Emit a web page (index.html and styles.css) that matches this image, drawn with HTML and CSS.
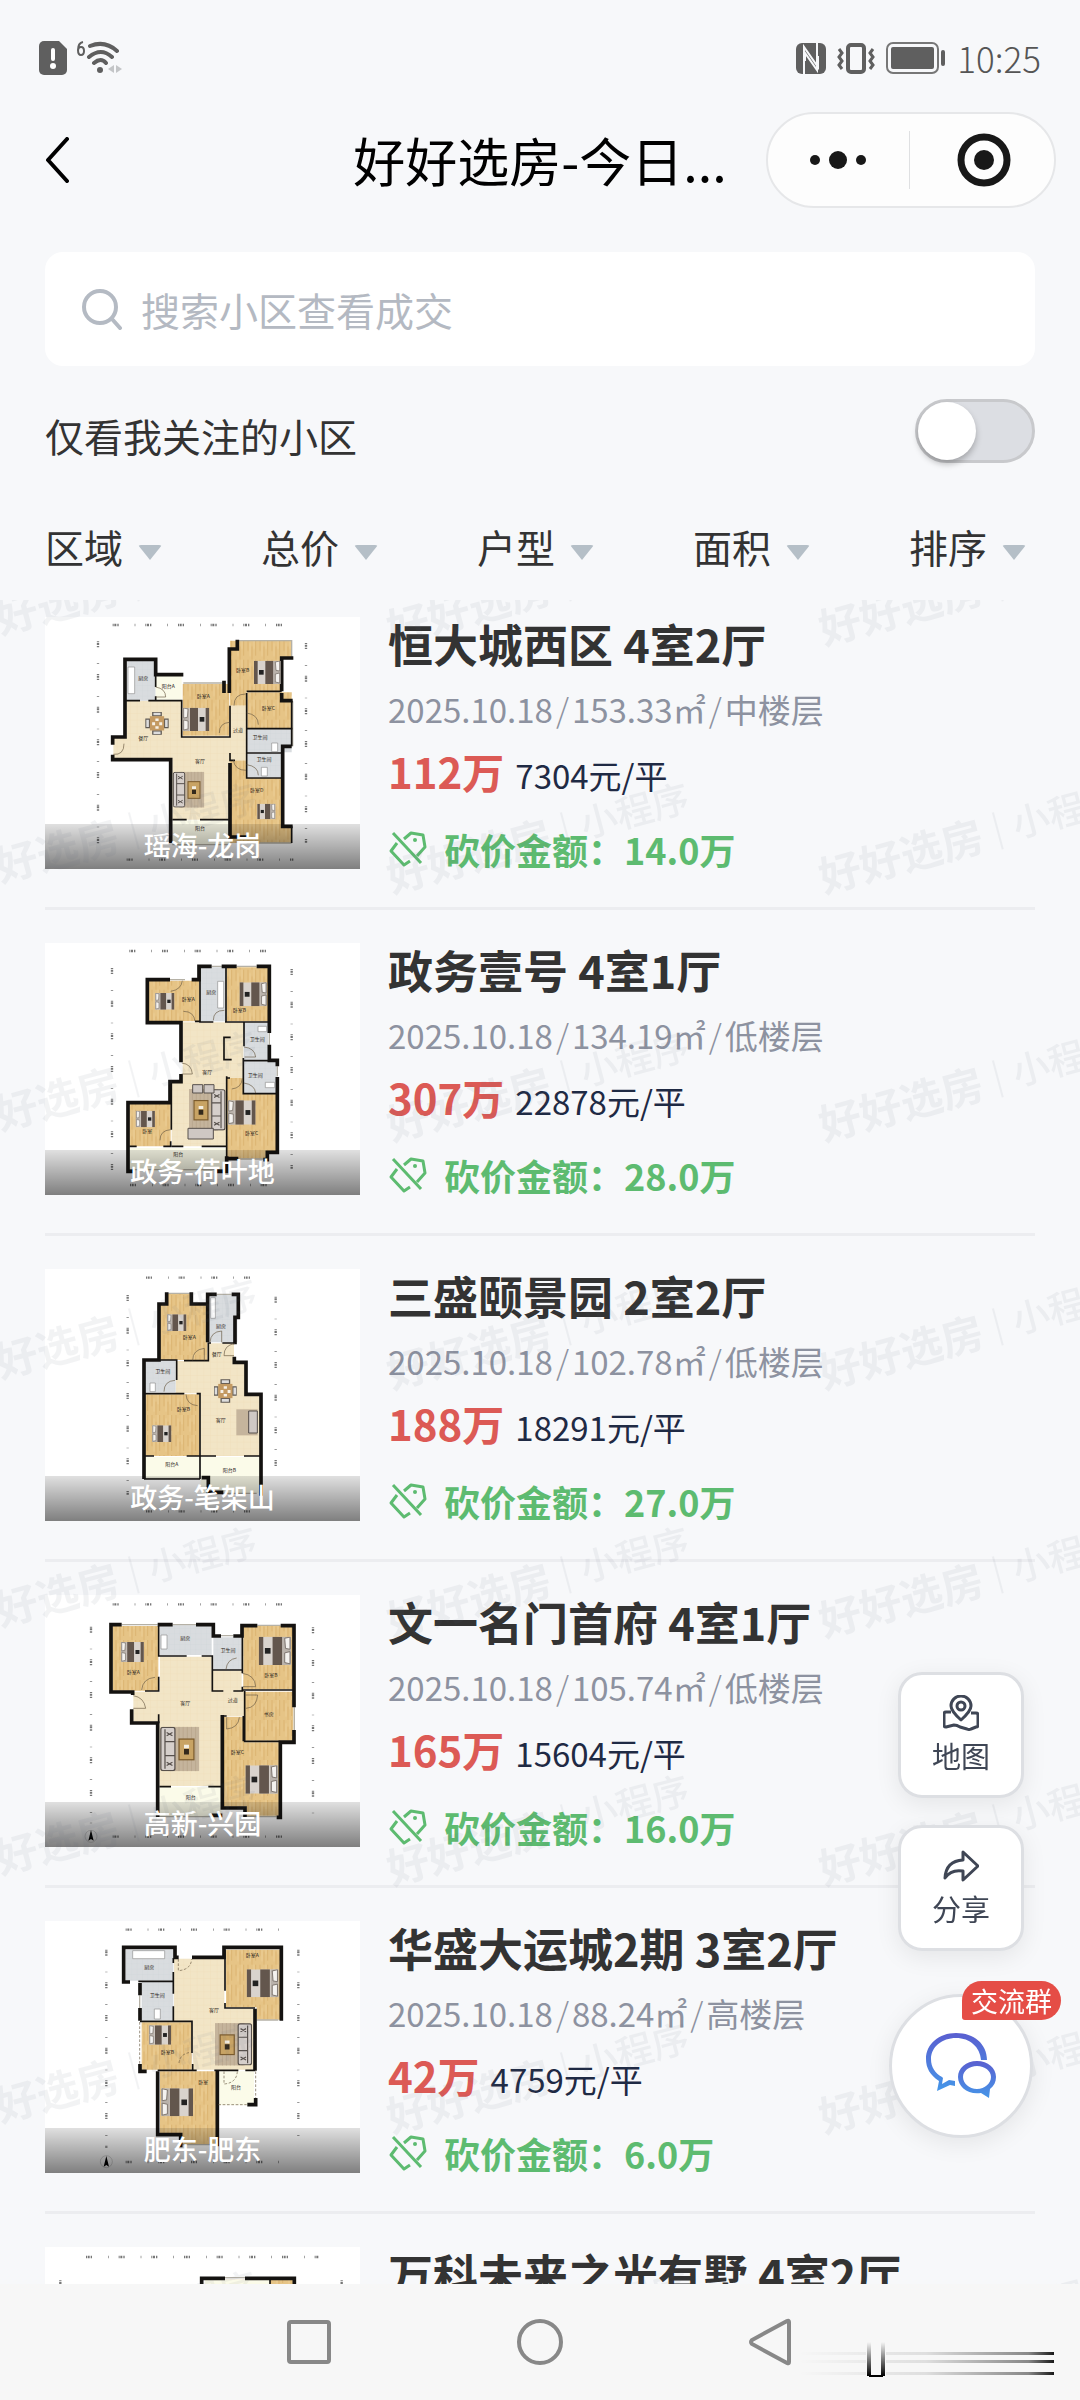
FILE: index.html
```html
<!DOCTYPE html>
<html lang="zh-CN">
<head>
    <meta charset="UTF-8">
    <meta name="viewport" content="width=device-width, initial-scale=1.0">
    <title>好好选房</title>
    <link rel="stylesheet" href="styles.css">
</head>
<body>
    <!-- Shared drawing parts -->
    <svg class="defs" aria-hidden="true">
        <defs>
            <pattern id="wood" width="36" height="60" patternUnits="userSpaceOnUse">
                <rect width="36" height="60" fill="#e6c486"/>
                <path d="M6 0v34M18 20v40M29 0v48" stroke="#dcb572" stroke-width="3"/>
                <path d="M12 10v40M24 0v28" stroke="#ecce96" stroke-width="3"/>
            </pattern>
            <pattern id="stone" width="20" height="20" patternUnits="userSpaceOnUse">
                <rect width="20" height="20" fill="#f2e5c6"/>
                <path d="M0 0h20M0 0v20" stroke="#ecdcb6" stroke-width="2"/>
            </pattern>
            <pattern id="tile" width="16" height="16" patternUnits="userSpaceOnUse">
                <rect width="16" height="16" fill="#d9dcdf"/>
                <path d="M0 0h16M0 0v16" stroke="#cdd1d5" stroke-width="1"/>
            </pattern>
            <symbol id="bed" viewBox="0 0 80 70">
                <rect width="80" height="70" fill="#d9d3cd"/>
                <path d="M0 0h11v70H0zM34 0h24v70H34z" fill="#63564d"/>
                <rect x="15" y="28" width="14" height="14" fill="#222"/>
                <path d="M60 0h20v70H60z" fill="#b9b2ab"/>
                <path d="M64 4l13-3v30l-11-2zM64 40l13-3v30l-13-3z" fill="#f4f2ef" stroke="#6b625b" stroke-width="2"/>
            </symbol>
            <symbol id="sofa" viewBox="0 0 95 108">
                <rect x="20" width="75" height="108" fill="#c5b49c"/>
                <path d="M26 0v108M36 0v108M46 0v108M56 0v108M66 0v108M76 0v108M86 0v108" stroke="#b7a58c" stroke-width="2"/>
                <rect x="2" y="2" width="34" height="104" rx="5" fill="#d6cfcb" stroke="#57504c" stroke-width="3"/>
                <path d="M12 6v96M12 36h24M12 70h24M16 14l14 8M16 22l14-8M16 86l14 8M16 94l14-8" stroke="#57504c" stroke-width="3"/>
                <rect x="46" y="30" width="36" height="50" fill="#c8a364" stroke="#7b5b2d" stroke-width="3"/>
                <path d="M58 44h12v8H58z" fill="#f3eee2"/>
                <path d="M58 54h12v13H58z" fill="#33291c"/>
            </symbol>
            <symbol id="dining" viewBox="0 0 70 70">
                <path d="M22 0h26v12H22zM22 58h26v12H22zM0 22h12v26H0zM58 22h12v26H58z" fill="#ddd" stroke="#5f5a54" stroke-width="4"/>
                <rect x="13" y="13" width="44" height="44" fill="#c49a62"/>
                <path d="M30 20h10v8H30zM20 32h9v9h-9zM42 32h9v9h-9zM30 44h10v8H30z" fill="#f7f1e6"/>
            </symbol>
            <symbol id="tag" viewBox="0 0 38 38">
                <path d="M15 9L22 3L34 5L36 17L28 26M8 13L2 21L15 35L21 31" fill="none" stroke="currentColor" stroke-width="3" stroke-linejoin="round"/>
                <path d="M4 3L32 33" stroke="currentColor" stroke-width="3"/>
                <circle cx="26" cy="10" r="2" fill="currentColor"/>
            </symbol>
        </defs>
    </svg>

    <!-- Status bar -->
    <div class="status-bar">
        <div class="status-group">
            <svg class="ic-sim" viewBox="0 0 28 34"><path d="M5 0h15l8 8v21a5 5 0 0 1-5 5H5a5 5 0 0 1-5-5V5a5 5 0 0 1 5-5z" fill="#5f5f5f"/><path d="M14 9v9" stroke="#fff" stroke-width="4" stroke-linecap="round"/><circle cx="14" cy="25" r="3" fill="#fff"/></svg>
            <svg class="ic-wifi" viewBox="0 0 46 34">
                <path d="M6 1Q1 2 1 9q0 5 3 5t3-4q0-4-3-4-3 0-3 4" fill="none" stroke="#5f5f5f" stroke-width="2"/>
                <g fill="none" stroke="#5f5f5f" stroke-width="4" stroke-linecap="round"><path d="M13 5q15-6 27 5M12 16q12-10 23 0M17 22q7-6 12 0"/></g>
                <circle cx="23" cy="29" r="3" fill="#5f5f5f"/>
                <path d="M31 28l6-4v8zM45 28l-6-4v8z" fill="#c3c5c7"/>
            </svg>
        </div>
        <div class="status-group right">
            <svg class="ic-nfc" viewBox="0 0 30 31"><rect width="30" height="31" rx="6" fill="#5f5f5f"/><path d="M8 31V4l14 20V13M21 0v27L9 10v8" fill="none" stroke="#f7f8fa" stroke-width="2"/></svg>
            <svg class="ic-vibrate" viewBox="0 0 38 31"><rect x="11" y="2" width="16" height="27" rx="3" fill="none" stroke="#5f5f5f" stroke-width="4"/><path d="M2 6l3 4-3 4 3 4-3 4 3 4M36 6l-3 4 3 4-3 4 3 4-3 4" fill="none" stroke="#5f5f5f" stroke-width="3"/></svg>
            <svg class="ic-battery" viewBox="0 0 60 32"><rect x="1" y="1" width="51" height="30" rx="6" fill="none" stroke="#777" stroke-width="2"/><rect x="5" y="5" width="43" height="22" rx="2" fill="#5f5f5f"/><rect x="55" y="8" width="4" height="16" rx="2" fill="#5f5f5f"/></svg>
            <span class="clock">10:25</span>
        </div>
    </div>

    <!-- Title bar -->
    <header class="title-bar">
        <button class="back" type="button" aria-label="返回"><svg viewBox="0 0 24 46"><path d="M22 2L3 23l19 21" fill="none" stroke="#000" stroke-width="4" stroke-linecap="round" stroke-linejoin="round"/></svg></button>
        <h1>好好选房-今日...</h1>
        <div class="capsule">
            <button type="button" aria-label="更多"><svg class="ic-more" viewBox="0 0 56 18"><circle cx="5" cy="9" r="5"/><circle cx="28" cy="9" r="9"/><circle cx="51" cy="9" r="5"/></svg></button>
            <button type="button" aria-label="关闭"><svg class="ic-close" viewBox="0 0 54 54"><circle cx="27" cy="27" r="23" fill="none" stroke="#181818" stroke-width="7"/><circle cx="27" cy="27" r="10"/></svg></button>
        </div>
    </header>

    <!-- Search and filters -->
    <form class="search">
        <svg viewBox="0 0 42 42" aria-hidden="true"><circle cx="19" cy="19" r="16" fill="none" stroke="#b4bac3" stroke-width="4"/><path d="M31 31l8 9" stroke="#b4bac3" stroke-width="4" stroke-linecap="round"/></svg>
        <input type="search" placeholder="搜索小区查看成交" aria-label="搜索小区查看成交">
    </form>

    <div class="follow">
        <label for="follow-only">仅看我关注的小区</label>
        <input type="checkbox" id="follow-only" class="switch">
    </div>

    <div class="filters">
        <label class="filter"><select aria-label="区域"><option>区域</option></select><span class="arrow"></span></label>
        <label class="filter"><select aria-label="总价"><option>总价</option></select><span class="arrow"></span></label>
        <label class="filter"><select aria-label="户型"><option>户型</option></select><span class="arrow"></span></label>
        <label class="filter"><select aria-label="面积"><option>面积</option></select><span class="arrow"></span></label>
        <label class="filter"><select aria-label="排序"><option>排序</option></select><span class="arrow"></span></label>
    </div>

    <!-- Listings -->
    <main class="list">
        <article class="item">
            <div class="thumb">
                <svg viewBox="45 52 945 756">
                    <path class="dims" d="M248 76H792M204 125V760M828 130V730M290 780H790"/>
                    <path class="wood" d="M600 123H785V175H755V275H650V318H600zM652 278H785V385H652zM458 253H598V408H458zM600 482H650V535H755V680H785V730H600z"/>
                    <path class="stone" d="M290 303H455V412H600V318H650V482H600V660H427V478H250V412H290z"/>
                    <path class="tile" d="M290 180H377V303H290zM652 388H785V458H652zM652 462H755V532H652z"/>
                    <path class="balcony" d="M377 225H455V300H377zM427 662H598V735H427z"/>
                    <path class="glass" d="M620 123H785V175M460 250H585M427 735H600M650 730H785M788 305V440"/>
                    <path class="wall" d="M248 465V480H422V730M248 435V412H285V179H377V225H460M598 280V148H622V120M582 243V280M755 275V175H790M755 280V303H788M785 440H758V680H788M600 490V712H655"/>
                    <path class="thin" d="M377 225V262M377 290V303M285 303H330M355 303H455V412H600V318M600 460V482H615M650 275H755M650 280V535H755M650 387H788M650 460H755M427 660H470M510 660H598M785 303V440M785 680V730"/>
                    <path class="door" d="M377 262q30 5 30 30h-30M282 432q0 35-32 32M612 318q0-35 35-35M650 340q35 5 35 35M568 400q0-30 30-32M610 482q5 30 38 30M650 495q35 5 35 32"/>
                    <use href="#bed" x="672" y="183" width="80" height="70"/>
                    <use href="#bed" x="-538" y="324" width="80" height="70" transform="scale(-1 1)"/>
                    <use href="#bed" x="667" y="612" width="84" height="47"/>
                    <use href="#sofa" x="428" y="516" width="95" height="108"/>
                    <use href="#dining" x="346" y="337" width="70" height="68"/>
                    <path class="fixture" d="M294 202h20v80h-20zM725 430h18v26h-18zM694 503h18v26h-18z"/>
                    <g class="room"><text x="340" y="242">厨房</text><text x="415" y="266">阳台A</text><text x="520" y="296">卧室A</text><text x="638" y="217">卧室B</text><text x="715" y="330">卧室C</text><text x="340" y="420">餐厅</text><text x="510" y="490">客厅</text><text x="624" y="398">过道</text><text x="690" y="418">卫生间</text><text x="702" y="484">卫生间</text><text x="680" y="578">卧室D</text><text x="510" y="690">阳台</text></g>
                </svg>
                <span class="caption">瑶海-龙岗</span>
            </div>
            <div class="info">
                <h2>恒大城西区 4室2厅</h2>
                <p class="meta"><span>2025.10.18</span><i>/</i><span>153.33㎡</span><i>/</i><span>中楼层</span></p>
                <p class="price"><strong>112万</strong><span>7304元/平</span></p>
                <p class="cut"><svg><use href="#tag"/></svg>砍价金额：14.0万</p>
            </div>
        </article>

        <article class="item">
            <div class="thumb">
                <svg viewBox="45 40 945 756">
                    <path class="dims" d="M298 64H738M246 115V730M785 118V720M300 766H740"/>
                    <path class="wood" d="M355 153H508V275H355zM590 113H714V275H590zM298 522H422V650H298zM590 445H640V492H740V665H712V687H590z"/>
                    <path class="stone" d="M458 278H640V445H590V650H425V452H458z"/>
                    <path class="tile" d="M512 113H588V275H512zM642 280H714V390H642zM642 395H740V490H642z"/>
                    <path class="balcony" d="M298 655H590V725H298z"/>
                    <path class="glass" d="M420 150H465M545 110H580M620 110H680M300 720H590M625 688H705M718 310V345M742 410V440"/>
                    <path class="wall" d="M420 150H352V279H453V398M453 433V456H420V519H294V725H310M485 150H507V110H545M575 110H620M680 110H718V310M718 345V392H742V410M742 442V668H712V690H700M590 687H625M590 680V725H560"/>
                    <path class="thin" d="M510 110V277H550M588 115V277M495 275H510M585 277H715M602 323H582V390H605M642 278V350M640 385V492H740M642 393H740M590 440V690M590 445H600M424 455V600M422 635V650H400M425 650H460M298 650H320M515 650H590"/>
                    <path class="door" d="M422 185q32-5 35-32M460 245q32 0 35 30M550 272q0-30 33-30M455 400q30 3 32 33h-32M642 352q32 3 35 30h-33M605 478q30-3 32-32M642 460q32 5 35 30M390 632q0-30 32-32"/>
                    <use href="#bed" x="-449" y="190" width="90" height="50" transform="scale(-1 1)"/>
                    <use href="#bed" x="628" y="158" width="84" height="72"/>
                    <use href="#bed" x="-389" y="543" width="86" height="50" transform="scale(-1 1)"/>
                    <use href="#bed" x="-677" y="512" width="84" height="73" transform="scale(-1 1)"/>
                    <use href="#sofa" x="-588" y="478" width="112" height="125" transform="scale(-1 1)"/>
                    <path class="seat" d="M488 465h30v25h-30zM522 465h30v25h-30zM474 596h76v32h-76z"/>
                    <path class="fixture" d="M563 155h18v80h-18zM684 290h26v16h-26zM706 458h28v16h-28z"/>
                    <g class="room"><text x="475" y="214">卧室A</text><text x="544" y="194">厨房</text><text x="628" y="246">卧室B</text><text x="682" y="334">卫生间</text><text x="676" y="442">卫生间</text><text x="532" y="434">客厅</text><text x="352" y="610">卧室</text><text x="665" y="615">卧室C</text><text x="445" y="678">阳台</text></g>
                </svg>
                <span class="caption">政务-荷叶地</span>
            </div>
            <div class="info">
                <h2>政务壹号 4室1厅</h2>
                <p class="meta"><span>2025.10.18</span><i>/</i><span>134.19㎡</span><i>/</i><span>低楼层</span></p>
                <p class="price"><strong>307万</strong><span>22878元/平</span></p>
                <p class="cut"><svg><use href="#tag"/></svg>砍价金额：28.0万</p>
            </div>
        </article>

        <article class="item">
            <div class="thumb">
                <svg viewBox="45 42 945 756">
                    <path class="dims" d="M348 68H690M293 120V720M737 125V680M348 769H690"/>
                    <path class="wood" d="M412 115H482V150H532V315H390V150H412zM346 418H508V603H346z"/>
                    <path class="stone" d="M437 318H537V265H612V325H645V420H690V603H512V415H437z"/>
                    <path class="tile" d="M538 118H622V262H538zM346 315H437V412H346z"/>
                    <path class="balcony" d="M346 606H508V672H346zM512 606H690V715H512z"/>
                    <path class="glass" d="M412 115H480M560 118H605M345 670H510M580 715H680"/>
                    <path class="wall" d="M410 112V147H387V315H342V672M484 112V147H533V118H560M605 118H625V187H615V268M613 305V322H648V418H693V722M533 147V262M515 668H535V712H580"/>
                    <path class="thin" d="M535 262V317H462M535 264H543M577 264H612M342 315H440V375M342 416H463M500 416H510V603M470 603H558M642 603H693M345 603H372M400 416H437M510 603V672M342 672H510"/>
                    <path class="door" d="M540 262q2-32 35-34v34M582 302q0-32 32-36M582 302h30M488 316q0-32 35-36v36M402 410q0-32 33-34M468 418q2 32 35 34"/>
                    <use href="#bed" x="-485" y="178" width="90" height="50" transform="scale(-1 1)"/>
                    <use href="#bed" x="-440" y="511" width="90" height="50" transform="scale(-1 1)"/>
                    <use href="#dining" x="552" y="373" width="68" height="70"/>
                    <path class="rug" d="M619 463h64v78h-64z"/>
                    <path class="seat" d="M656 468h26v66h-26z"/>
                    <path class="fixture" d="M542 128h14v62h-14zM360 384h16v26h-16z"/>
                    <g class="room"><text x="478" y="252">卧室A</text><text x="573" y="220">厨房</text><text x="560" y="302">餐厅</text><text x="398" y="354">卫生间</text><text x="460" y="467">卧室B</text><text x="572" y="502">客厅</text><text x="425" y="634">阳台A</text><text x="598" y="650">阳台B</text></g>
                </svg>
                <span class="caption">政务-笔架山</span>
            </div>
            <div class="info">
                <h2>三盛颐景园 2室2厅</h2>
                <p class="meta"><span>2025.10.18</span><i>/</i><span>102.78㎡</span><i>/</i><span>低楼层</span></p>
                <p class="price"><strong>188万</strong><span>18291元/平</span></p>
                <p class="cut"><svg><use href="#tag"/></svg>砍价金额：27.0万</p>
            </div>
        </article>

        <article class="item">
            <div class="thumb">
                <svg viewBox="45 45 945 756">
                    <path class="dims" d="M248 73H787M183 140V730M849 142V705M248 770H787"/>
                    <path class="wood" d="M248 138H385V332H248zM640 138H790V328H640zM645 335H790V482H645zM580 410H642V487H747V707H650V680H580z"/>
                    <path class="stone" d="M390 230H545V272H635V330H642V408H577V618H388V425H310V335H390z"/>
                    <path class="tile" d="M390 136H545V225H390zM550 172H635V270H550z"/>
                    <path class="balcony" d="M388 622H575V710H388z"/>
                    <path class="glass" d="M275 134H383M428 134H498M573 167H610M682 136H752M793 382V450M388 710H545M650 710H740"/>
                    <path class="wall" d="M275 134H243V336H308V345M305 388V429H383V712M383 134H428M498 134H550V168H573M610 168H636V137H682M752 137H792V382M792 450V487H751V712H740M577 405V684H645V712M545 706H577"/>
                    <path class="thin" d="M386 138V228H470M515 228H547V333H580M547 270H635M637 140V280M637 320V330H790M386 290V333H345M386 403V430M644 333V484H792M577 408H590M640 408V484M388 620H423M535 620H575M610 333H640"/>
                    <path class="door" d="M335 330q3-35 40-38M310 347q32 5 37 38h-37M588 268q3-30 32-34M637 280q38 5 40 40h-38M645 345h38q-3 38-35 40M590 412v35q35-3 38-35"/>
                    <use href="#bed" x="-356" y="186" width="98" height="60" transform="scale(-1 1)"/>
                    <use href="#bed" x="686" y="170" width="98" height="85"/>
                    <use href="#bed" x="646" y="556" width="98" height="85"/>
                    <use href="#sofa" x="390" y="440" width="118" height="134"/>
                    <path class="fixture" d="M393 165h18v42h-18z"/>
                    <g class="room"><text x="310" y="282">卧室A</text><text x="466" y="181">厨房</text><text x="594" y="217">卫生间</text><text x="723" y="290">卧室B</text><text x="466" y="376">客厅</text><text x="608" y="365">过道</text><text x="716" y="407">书房</text><text x="622" y="521">卧室C</text><text x="482" y="656">阳台</text></g>
                    <circle cx="183" cy="769" r="18" fill="none" stroke="#888"/><path d="M183 750l8 32-8-5-8 5z"/>
                </svg>
                <span class="caption">高新-兴园</span>
            </div>
            <div class="info">
                <h2>文一名门首府 4室1厅</h2>
                <p class="meta"><span>2025.10.18</span><i>/</i><span>105.74㎡</span><i>/</i><span>低楼层</span></p>
                <p class="price"><strong>165万</strong><span>15604元/平</span></p>
                <p class="cut"><svg><use href="#tag"/></svg>砍价金额：16.0万</p>
            </div>
        </article>

        <article class="item">
            <div class="thumb">
                <svg viewBox="45 49 945 756">
                    <path class="dims" d="M287 75H747M229 135V730M805 135V715M287 772H747"/>
                    <path class="wood" d="M588 135H750V345H680V308H588zM335 353H485V495H335zM390 500H558V718H455V685H390z"/>
                    <path class="stone" d="M432 162H583V312H670V495H488V350H432z"/>
                    <path class="tile" d="M288 135H430V228H288zM335 232H430V347H335z"/>
                    <path class="balcony" d="M560 500H672V602H560z"/>
                    <path class="glass" d="M680 346H745M329 272V310M455 720H555"/>
                    <path class="wall" d="M300 232H281V128H435V158H446M486 158H582V128H754V348M330 235V272M330 310V348M675 312V498M383 500V690H452V728M562 498V725M330 478V500H350M677 580V600H652"/>
                    <path class="thin" d="M430 160V175M430 202V230H325M430 230V267M430 305V350H486V445M488 478V497H383M585 135V258M585 295V310H675M488 497H500M553 497H625M646 497H675M330 350H430"/>
                    <path class="door" stroke-dasharray="8 5" d="M445 163v35q38-3 40-35M447 475q3-28 35-32M582 500v38q38-3 40-38M329 352V478M677 500V580M565 600H650"/>
                    <use href="#bed" x="650" y="194" width="96" height="84"/>
                    <use href="#bed" x="-440" y="362" width="100" height="58" transform="scale(-1 1)"/>
                    <use href="#bed" x="-489" y="551" width="96" height="84" transform="scale(-1 1)"/>
                    <use href="#sofa" x="-667" y="355" width="112" height="128" transform="scale(-1 1)"/>
                    <path class="fixture" d="M308 138h96v24h-96zM373 313h18v30h-18z"/>
                    <g class="room"><text x="358" y="194">厨房</text><text x="382" y="277">卫生间</text><text x="667" y="158">卧室A</text><text x="552" y="322">客厅</text><text x="412" y="447">卧室B</text><text x="520" y="538">卧室</text><text x="618" y="553">阳台</text></g>
                    <circle cx="229" cy="771" r="18" fill="none" stroke="#888"/><path d="M229 754l8 32-8-5-8 5z"/>
                </svg>
                <span class="caption">肥东-肥东</span>
            </div>
            <div class="info">
                <h2>华盛大运城2期 3室2厅</h2>
                <p class="meta"><span>2025.10.18</span><i>/</i><span>88.24㎡</span><i>/</i><span>高楼层</span></p>
                <p class="price"><strong>42万</strong><span>4759元/平</span></p>
                <p class="cut"><svg><use href="#tag"/></svg>砍价金额：6.0万</p>
            </div>
        </article>

        <article class="item">
            <div class="thumb">
                <svg viewBox="0 0 945 756">
                    <path class="dims" d="M123 30H822M46 100V600M890 100V600"/>
                    <path class="wood" d="M480 98H745V300H480z"/>
                    <path class="balcony" d="M480 98H675V300H480z"/>
                    <path class="glass" d="M540 92H600"/>
                    <path class="wall" d="M470 300V94H540M600 94H748V300"/>
                    <path class="thin" d="M675 94V300"/>
                </svg>
            </div>
            <div class="info">
                <h2>万科未来之光有墅 4室2厅</h2>
            </div>
        </article>

        <svg class="watermark" aria-hidden="true">
            <defs>
                <pattern id="mark" x="380" y="180" width="432" height="248" patternUnits="userSpaceOnUse">
                    <g transform="translate(12 113) rotate(-15)">
                        <text class="mark-name" x="0" y="0">好好选房</text>
                        <path d="M184 -34V4" stroke="#5a6478" stroke-width="2"/>
                        <text class="mark-type" x="200" y="-3">小程序</text>
                    </g>
                </pattern>
            </defs>
            <rect width="100%" height="100%" fill="url(#mark)"/>
        </svg>
    </main>

    <!-- Floating buttons -->
    <div class="floats">
        <button class="float-btn" type="button">
            <svg viewBox="0 0 36 36"><path d="M18 25Q8 16 8 11a10 10 0 0 1 20 0Q28 16 18 25z"/><circle cx="18" cy="11" r="4"/><path d="M8 17H3q-2 0-2 2v11q0 2 2 2l8-2q3 0 6 2l7 2q2 1 4 0l5-2q2 0 2-2V20q0-2-2-2h-5"/></svg>
            地图
        </button>
        <button class="float-btn" type="button">
            <svg viewBox="0 0 36 36"><path d="M20 4l15 14-15 14v-9Q8 21 2 30 3 13 20 12z"/></svg>
            分享
        </button>
        <button class="chat" type="button">
            <svg viewBox="0 0 70 66">
                <defs><linearGradient id="chat-fill" x1="0" y1="0" x2="0" y2="1"><stop offset="0" stop-color="#5a5fd0"/><stop offset="1" stop-color="#4596e8"/></linearGradient></defs>
                <path fill="url(#chat-fill)" d="M30 0C48 0 61 11 61 27H55C54 14 44 5 30 5 16 5 5 14 5 26c0 8 4 14 11 18l1 1-1 6 7-4 6 1v5l-5-1-13 6 2-10C4 42 0 35 0 26 0 11 13 0 30 0z"/>
                <path fill="url(#chat-fill)" fill-rule="evenodd" d="M51 28c11 0 19 7 19 16 0 5-2 9-6 12l-1 9-8-5c-13 2-23-6-23-16 0-9 8-16 19-16zM51 33c-8 0-14 5-14 11s6 12 14 12 14-6 14-12-6-11-14-11z"/>
            </svg>
            <span class="badge">交流群</span>
        </button>
    </div>

    <!-- System navigation -->
    <nav class="sys-nav">
        <button type="button" aria-label="最近任务"><svg viewBox="0 0 48 48"><rect x="4" y="4" width="40" height="40" rx="2"/></svg></button>
        <button type="button" aria-label="主页"><svg viewBox="0 0 48 48"><circle cx="24" cy="24" r="21"/></svg></button>
        <button type="button" aria-label="返回上一级"><svg viewBox="0 0 48 48"><path d="M42 4v40q0 2-2 1L5 26q-2-2 0-4L40 3q2-1 2 1z"/></svg></button>
        <svg class="smear" viewBox="0 0 260 40" aria-hidden="true">
            <defs>
                <linearGradient id="fade-x"><stop offset="0" stop-color="#000" stop-opacity="0"/><stop offset=".5" stop-color="#000" stop-opacity=".1"/><stop offset=".9" stop-color="#000" stop-opacity=".45"/><stop offset="1" stop-color="#000" stop-opacity=".9"/></linearGradient>
                <linearGradient id="fade-y" x1="0" y1="0" x2="0" y2="1"><stop offset="0" stop-color="#000" stop-opacity="0"/><stop offset="1" stop-color="#000"/></linearGradient>
            </defs>
            <path fill="url(#fade-x)" d="M0 12h256v3H0zM0 20h256v3H0zM0 32h256v3H0z"/>
            <path fill="#f7f7f7" d="M68 2h20v34H68z"/>
            <path fill="url(#fade-y)" d="M69 2h4v34h-4zM83 2h4v34h-4z"/>
            <path d="M71 36h14" stroke="#000" stroke-width="2"/>
        </svg>
    </nav>
</body>
</html>
```
FILE: styles.css
```css
/* Reset some default styles */
* {
    box-sizing: border-box;
}

body, h1, h2, p {
    margin: 0;
    padding: 0;
}

button, input, select {
    margin: 0;
    padding: 0;
    border: none;
    background: none;
    font-family: inherit;
    color: inherit;
}

svg {
    display: block;
    flex: none;
}

body {
    height: 100vh;
    display: flex;
    flex-direction: column;
    overflow: hidden;
    background-color: #f7f8fa;
    font-family: "Noto Sans CJK SC", sans-serif;
    color: #333;
}

.defs {
    position: absolute;
    width: 0;
    height: 0;
}

/* Status bar */
.status-bar {
    height: 100px;
    padding: 16px 39px 0 39px;
    display: flex;
    justify-content: space-between;
    align-items: center;
    flex: none;
}

.status-group {
    display: flex;
    align-items: center;
    gap: 10px;
}

.status-group.right {
    gap: 11px;
}

.ic-sim {
    width: 28px;
    height: 34px;
}

.ic-wifi {
    width: 46px;
    height: 34px;
}

.ic-nfc {
    width: 30px;
    height: 31px;
}

.ic-vibrate {
    width: 38px;
    height: 31px;
}

.ic-battery {
    width: 60px;
    height: 32px;
}

.clock {
    font-size: 35px;
    line-height: 40px;
    font-weight: 300;
    color: #555;
}

/* Title bar */
.title-bar {
    height: 120px;
    flex: none;
    display: grid;
    grid-template-columns: 1fr auto 1fr;
    align-items: center;
}

.back {
    justify-self: start;
    margin-left: 45px;
}

.back svg {
    width: 24px;
    height: 46px;
}

.title-bar h1 {
    font-size: 52px;
    line-height: 64px;
    font-weight: 400;
    color: #000;
}

.capsule {
    justify-self: end;
    width: 290px;
    height: 96px;
    margin-right: 24px;
    display: flex;
    align-items: center;
    border: 2px solid #e6e7e9;
    border-radius: 48px;
    background-color: #fdfdfd;
}

.capsule button {
    flex: 1;
    height: 58px;
    display: flex;
    justify-content: center;
    align-items: center;
}

.capsule button + button {
    padding-left: 4px;
    border-left: 1px solid #dfe0e2;
}

.capsule svg {
    fill: #181818;
}

.ic-more {
    width: 56px;
    height: 18px;
}

.ic-close {
    width: 54px;
    height: 54px;
}

/* Search and filters */
.search {
    height: 114px;
    flex: none;
    margin: 32px 45px 0;
    padding: 0 36px;
    display: flex;
    align-items: center;
    gap: 18px;
    border-radius: 18px;
    background-color: #fff;
}

.search svg {
    width: 42px;
    height: 42px;
}

.search input {
    flex: 1;
    font-size: 39px;
    line-height: 56px;
    outline: none;
}

.search input::placeholder {
    color: #b4b9c2;
}

.follow {
    margin: 33px 45px 0;
    display: flex;
    justify-content: space-between;
    align-items: flex-end;
    flex: none;
}

.follow label {
    font-size: 39px;
    line-height: 56px;
}

.switch {
    appearance: none;
    width: 120px;
    height: 64px;
    border: 3px solid #c8c9cc;
    border-radius: 32px;
    background-color: #dcdee3;
}

.switch::before {
    content: "";
    display: block;
    width: 58px;
    height: 58px;
    border-radius: 50%;
    background-color: #fff;
    box-shadow: 0 4px 6px rgba(0, 0, 0, 0.25);
}

.switch:checked::before {
    margin-left: auto;
}

.filters {
    margin-top: 55px;
    padding-bottom: 26px;
    display: grid;
    grid-template-columns: repeat(5, 1fr);
    flex: none;
}

.filter {
    padding-left: 45px;
    display: flex;
    align-items: center;
    gap: 14px;
}

.filter select {
    appearance: none;
    height: 56px;
    font-size: 39px;
    line-height: 56px;
}

.arrow {
    margin-top: 12px;
    border: 12px solid transparent;
    border-top: 15px solid #b5bfc7;
    border-bottom: none;
    border-radius: 3px;
}

/* Listings */
.list {
    position: relative;
    flex: 1;
    min-height: 0;
    overflow: hidden;
    padding: 0 45px;
}

.item {
    display: flex;
    gap: 28px;
    padding: 33px 0 38px;
    border-bottom: 3px solid #ecedf0;
}

.item:first-child {
    padding-top: 17px;
}

.thumb {
    position: relative;
    width: 315px;
    height: 252px;
    flex: none;
    background-color: #fff;
}

.thumb svg {
    width: 100%;
    height: 100%;
}

.caption {
    position: absolute;
    left: 0;
    right: 0;
    bottom: 0;
    padding-bottom: 3px;
    font-size: 27px;
    line-height: 42px;
    font-weight: 500;
    text-align: center;
    color: #fff;
    background: linear-gradient(rgba(0, 0, 0, 0.12), rgba(0, 0, 0, 0.5));
}

.info {
    flex: 1;
    min-width: 0;
    display: flex;
    flex-direction: column;
    gap: 18px;
}

.info h2 {
    font-size: 45px;
    line-height: 54px;
    font-weight: 700;
    white-space: nowrap;
}

.meta {
    display: flex;
    gap: 3px;
    font-size: 33px;
    line-height: 40px;
    color: #8d92a0;
}

.meta i {
    font-style: normal;
    font-weight: 300;
}

.price {
    display: flex;
    align-items: baseline;
    gap: 11px;
    line-height: 48px;
    color: #1f2a44;
}

.price strong {
    font-size: 42px;
    color: #dc5a55;
}

.price span {
    font-size: 33px;
}

.cut {
    margin-top: auto;
    display: flex;
    align-items: center;
    gap: 17px;
    padding-left: 1px;
    font-size: 36px;
    line-height: 40px;
    font-weight: 700;
    color: #5dbb70;
}

.cut svg {
    width: 38px;
    height: 38px;
}

/* Floor plans */
.wood {
    fill: url(#wood);
}

.stone {
    fill: url(#stone);
}

.tile {
    fill: url(#tile);
}

.balcony {
    fill: #fbfbe9;
}

.wall, .thin, .glass, .door, .dims {
    fill: none;
    stroke: #141210;
    stroke-width: 11;
}

.thin {
    stroke-width: 5;
}

.glass {
    stroke: #b5b1a6;
    stroke-width: 4;
}

.door {
    stroke: #6b5c45;
    stroke-width: 2;
}

.dims {
    stroke: #777;
    stroke-width: 7;
    stroke-dasharray: 3 2 6 3 4 48 2 30;
}

.fixture {
    fill: #fff;
    stroke: #8f8f8f;
    stroke-width: 2;
}

.seat {
    fill: #cfc8c4;
    stroke: #57504c;
    stroke-width: 3;
}

.rug {
    fill: #c5b49c;
}

.room text {
    font-size: 15px;
    text-anchor: middle;
    fill: #2c261c;
}

/* Repeated mark over the list */
.watermark {
    position: absolute;
    top: 0;
    left: 0;
    width: 100%;
    height: 100%;
    opacity: 0.07;
    pointer-events: none;
}

.mark-name, .mark-type {
    font-size: 42px;
    font-weight: 700;
    fill: #5a6478;
}

.mark-type {
    font-size: 37px;
    font-weight: 500;
}

/* Floating buttons */
.floats {
    position: fixed;
    right: 47px;
    bottom: 262px;
    display: flex;
    flex-direction: column;
    align-items: center;
    gap: 27px;
}

.float-btn {
    width: 126px;
    height: 126px;
    display: flex;
    flex-direction: column;
    justify-content: center;
    align-items: center;
    gap: 4px;
    border: 3px solid #dddfe3;
    border-radius: 24px;
    background-color: #fff;
    box-shadow: 0 6px 24px rgba(0, 0, 0, 0.08);
    font-size: 29px;
    line-height: 40px;
    color: #3f4655;
}

.float-btn svg {
    width: 36px;
    height: 36px;
    fill: none;
    stroke: #3f4655;
    stroke-width: 3;
    stroke-linejoin: round;
}

.chat {
    position: relative;
    width: 144px;
    height: 144px;
    margin-top: 16px;
    display: flex;
    justify-content: center;
    align-items: center;
    border: 3px solid #dddfe3;
    border-radius: 50%;
    background-color: #fff;
    box-shadow: 0 6px 24px rgba(0, 0, 0, 0.08);
}

.chat svg {
    width: 70px;
    height: 66px;
}

.badge {
    position: absolute;
    top: -16px;
    left: 70px;
    padding: 0 9px;
    border-radius: 20px 20px 20px 3px;
    background-color: #e54d46;
    font-size: 27px;
    line-height: 39px;
    white-space: nowrap;
    color: #fff;
}

/* System navigation */
.sys-nav {
    position: relative;
    height: 116px;
    flex: none;
    padding: 0 193px;
    display: flex;
    background-color: #f7f7f7;
}

.sys-nav button {
    flex: 1;
    display: flex;
    justify-content: center;
    align-items: center;
}

.sys-nav button svg {
    width: 48px;
    height: 48px;
    fill: none;
    stroke: #888;
    stroke-width: 4;
}

.smear {
    position: absolute;
    right: 22px;
    bottom: 20px;
    width: 260px;
    height: 40px;
}
```
